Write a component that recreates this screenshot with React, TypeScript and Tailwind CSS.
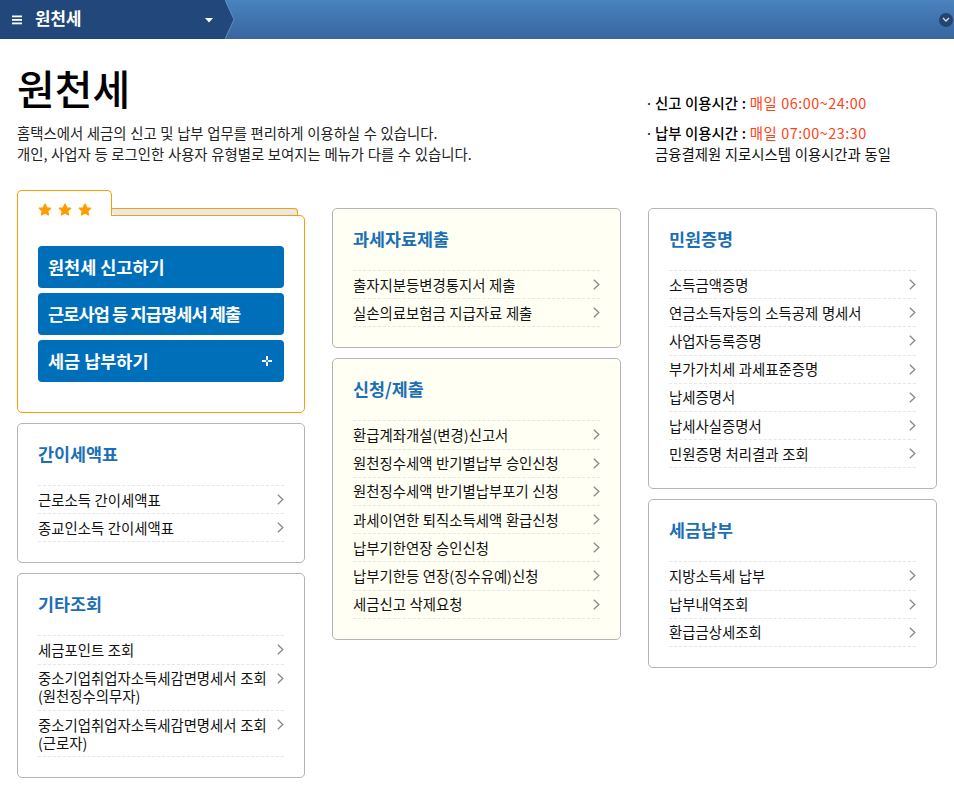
import React from 'react';

function Chevron() {
  return (
    <svg width="7" height="11" viewBox="0 0 7 11" className="absolute right-0 top-[8px]" fill="none">
      <path d="M0.8 0.8 L5.8 5.5 L0.8 10.2" stroke="#8c8c8c" strokeWidth="1.4" />
    </svg>
  );
}

function LinkList({ items }: { items: React.ReactNode[] }) {
  return (
    <ul className="border-b border-dashed border-[#e6e6e6]">
      {items.map((item, i) => (
        <li key={i} className="relative border-t border-dashed border-[#e6e6e6] py-[4.5px] pr-[14px] text-[14.4px] leading-[18.2px] [word-spacing:0.4px] text-[#111]">
          {item}
          <Chevron />
        </li>
      ))}
    </ul>
  );
}

function Card({ title, items, tint }: { title: string; items: React.ReactNode[]; tint?: boolean }) {
  return (
    <section className={`rounded-[5px] border border-[#b4b4b4] px-[20px] pt-[19px] pb-[20px] ${tint ? 'bg-[#fffff4]' : 'bg-white'}`}>
      <h3 className="mb-[21px] text-[17.4px] leading-[21px] font-bold text-[#1b6fb5]">{title}</h3>
      <LinkList items={items} />
    </section>
  );
}

function Star() {
  return (
    <svg width="14" height="13" viewBox="0 0 24 23" fill="#ff9c00" stroke="#ff9c00" strokeWidth="2.5" strokeLinejoin="round">
      <path d="M12 2 L15 8.6 L22 9.4 L16.8 14.2 L18.2 21 L12 17.6 L5.8 21 L7.2 14.2 L2 9.4 L9 8.6 Z" />
    </svg>
  );
}

function BlueButton({ children, plus, tight }: { children: React.ReactNode; plus?: boolean; tight?: boolean }) {
  return (
    <a className={`flex h-[42px] items-center justify-between rounded-[4px] bg-[#006fba] pr-[12px] pl-[10px] text-[17.5px] font-bold text-white ${tight ? 'tracking-[-0.85px]' : ''}`}>
      <span>{children}</span>
      {plus && (
        <svg width="10" height="10" viewBox="0 0 10 10" fill="white">
          <path d="M4 0 H6 V3.5 L5 4.5 L4 3.5 Z M4 10 H6 V6.5 L5 5.5 L4 6.5 Z M0 4 V6 H3.5 L4.5 5 L3.5 4 Z M10 4 V6 H6.5 L5.5 5 L6.5 4 Z" />
        </svg>
      )}
    </a>
  );
}

function FolderCard() {
  return (
    <div className="flex flex-col">
      <div className="relative z-10 -mb-px flex h-[26px]">
        <div className="flex w-[95px] gap-[6px] rounded-t-[5px] border border-b-0 border-[#ff9c00] bg-white pt-[12px] pl-[20px]">
          <Star />
          <Star />
          <Star />
        </div>
        <div className="mt-[18px] mr-[7px] h-[7px] flex-1 rounded-tr-[4px] rounded-bl-[4px] border-t border-r border-[#ff9c00] bg-[#e8e8e8]" />
      </div>
      <div className="flex h-[198px] flex-col gap-[5px] rounded-tr-[5px] rounded-b-[5px] border border-[#ff9c00] bg-white px-[20px] pt-[30px]">
        <BlueButton>원천세 신고하기</BlueButton>
        <BlueButton tight>근로사업 등 지급명세서 제출</BlueButton>
        <BlueButton plus>세금 납부하기</BlueButton>
      </div>
    </div>
  );
}

export default function App() {
  return (
    <div className="h-[801px] w-[954px] overflow-hidden bg-white font-['Noto_Sans_CJK_KR','Noto_Sans',sans-serif] text-[#111]">
      <header className="flex h-[39px] items-center bg-gradient-to-b from-[#4a83bf] to-[#38659f]">
        <div className="flex h-full w-[225px] items-center bg-[#22477a] pr-[14px] pl-[12px] text-white">
          <svg width="10" height="10" viewBox="0 0 10 10" fill="white">
            <rect y="0.5" width="10" height="1.8" />
            <rect y="4" width="10" height="1.8" />
            <rect y="7.5" width="10" height="1.8" />
          </svg>
          <span className="mb-[2px] ml-[13px] flex-1 text-[16.8px] font-bold">원천세</span>
          <svg width="8" height="5" viewBox="0 0 8 5" fill="white" className="mt-[1px] mr-[-2px]">
            <path d="M0 0 H8 L4 4.5 Z" />
          </svg>
        </div>
        <svg width="10" height="39" viewBox="0 0 10 39" className="shrink-0">
          <path d="M0 0 L9 19.5 L0 39 Z" fill="#22477a" />
          <path d="M0 0 L9 19.5 L0 39" fill="none" stroke="#6f9ccc" strokeWidth="0.8" />
        </svg>
        <div className="flex-1" />
        <div className="mr-[1px] flex h-[14px] w-[14px] items-center justify-center rounded-full bg-[#23456f]">
          <svg width="8" height="6" viewBox="0 0 8 6" fill="none">
            <path d="M1 1 L4 4 L7 1" stroke="#d7e2ee" strokeWidth="1.3" />
          </svg>
        </div>
      </header>

      <div className="flex px-[17px] pt-[20px]">
        <div className="w-[630px]">
          <h1 className="text-[41px] leading-[56px] font-medium text-black">원천세</h1>
          <p className="mt-[7px] text-[14.4px] leading-[21px] [word-spacing:0.4px] text-[#222]">
            홈택스에서 세금의 신고 및 납부 업무를 편리하게 이용하실 수 있습니다.
            <br />
            개인, 사업자 등 로그인한 사용자 유형별로 보여지는 메뉴가 다를 수 있습니다.
          </p>
        </div>
        <div className="-ml-[2px] pt-[33px] text-[14.4px] leading-[21px] [word-spacing:0.4px]">
          <p className="flex">
            <span className="w-[10px]">·</span>
            <span>
              <b className="font-medium text-black">신고 이용시간 :</b> <span className="tracking-[0.5px] text-[#ff4218]">매일 06:00~24:00</span>
            </span>
          </p>
          <p className="mt-[9px] flex">
            <span className="w-[10px]">·</span>
            <span>
              <b className="font-medium text-black">납부 이용시간 :</b> <span className="tracking-[0.5px] text-[#ff4218]">매일 07:00~23:30</span>
              <br />
              금융결제원 지로시스템 이용시간과 동일
            </span>
          </p>
        </div>
      </div>

      <div className="mt-[26px] grid grid-cols-[288px_289px_289px] gap-x-[27px] px-[17px]">
        <div className="flex flex-col gap-[10px]">
          <FolderCard />
          <Card title="간이세액표" items={['근로소득 간이세액표', '종교인소득 간이세액표']} />
          <Card
            title="기타조회"
            items={[
              '세금포인트 조회',
              <>중소기업취업자소득세감면명세서 조회<br />(원천징수의무자)</>,
              <>중소기업취업자소득세감면명세서 조회<br />(근로자)</>,
            ]}
          />
        </div>
        <div className="flex flex-col gap-[10px] pt-[18px]">
          <Card tint title="과세자료제출" items={['출자지분등변경통지서 제출', '실손의료보험금 지급자료 제출']} />
          <Card
            tint
            title="신청/제출"
            items={[
              '환급계좌개설(변경)신고서',
              '원천징수세액 반기별납부 승인신청',
              '원천징수세액 반기별납부포기 신청',
              '과세이연한 퇴직소득세액 환급신청',
              '납부기한연장 승인신청',
              '납부기한등 연장(징수유예)신청',
              '세금신고 삭제요청',
            ]}
          />
        </div>
        <div className="flex flex-col gap-[10px] pt-[18px]">
          <Card
            title="민원증명"
            items={[
              '소득금액증명',
              '연금소득자등의 소득공제 명세서',
              '사업자등록증명',
              '부가가치세 과세표준증명',
              '납세증명서',
              '납세사실증명서',
              '민원증명 처리결과 조회',
            ]}
          />
          <Card title="세금납부" items={['지방소득세 납부', '납부내역조회', '환급금상세조회']} />
        </div>
      </div>
    </div>
  );
}
